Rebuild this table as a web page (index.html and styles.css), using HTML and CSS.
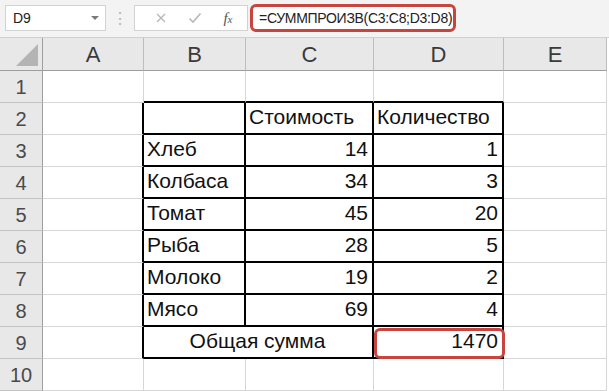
FILE: index.html
```html
<!DOCTYPE html>
<html lang="ru">
<head>
  <meta charset="UTF-8">
  <meta name="viewport" content="width=device-width, initial-scale=1.0">
  <link rel="stylesheet" href="styles.css">
  <title>Книга1</title>
</head>
<body>
  <div class="bar">
    <div class="namebox">
      <span>D9</span>
      <span class="arrow"></span>
    </div>
    <div class="grip">⋮</div>
    <div class="fxbox">
      <svg width="12" height="12" viewBox="0 0 12 12"><path d="M2 2 L10 10 M10 2 L2 10" stroke="#b8b8b8" stroke-width="1.4" fill="none"/></svg>
      <svg width="14" height="12" viewBox="0 0 14 12"><path d="M1.5 6.5 L5 10 L12.5 1.5" stroke="#b8b8b8" stroke-width="1.6" fill="none"/></svg>
      <span class="fx"><i>f</i><i class="x">x</i></span>
    </div>
    <div class="formula">=СУММПРОИЗВ(C3:C8;D3:D8)</div>
  </div>

  <div class="sheet">
    <div class="corner"><span class="tri"></span></div>
    <div class="colhead">A</div>
    <div class="colhead">B</div>
    <div class="colhead">C</div>
    <div class="colhead">D</div>
    <div class="colhead">E</div>

    <div class="rowhead">1</div>
    <div class="cell"></div>
    <div class="cell above"></div>
    <div class="cell above"></div>
    <div class="cell above"></div>
    <div class="cell"></div>

    <div class="rowhead">2</div>
    <div class="cell beside"></div>
    <div class="cell box"></div>
    <div class="cell box">Стоимость</div>
    <div class="cell box">Количество</div>
    <div class="cell"></div>

    <div class="rowhead">3</div>
    <div class="cell beside"></div>
    <div class="cell box">Хлеб</div>
    <div class="cell box num">14</div>
    <div class="cell box num">1</div>
    <div class="cell"></div>

    <div class="rowhead">4</div>
    <div class="cell beside"></div>
    <div class="cell box">Колбаса</div>
    <div class="cell box num">34</div>
    <div class="cell box num">3</div>
    <div class="cell"></div>

    <div class="rowhead">5</div>
    <div class="cell beside"></div>
    <div class="cell box">Томат</div>
    <div class="cell box num">45</div>
    <div class="cell box num">20</div>
    <div class="cell"></div>

    <div class="rowhead">6</div>
    <div class="cell beside"></div>
    <div class="cell box">Рыба</div>
    <div class="cell box num">28</div>
    <div class="cell box num">5</div>
    <div class="cell"></div>

    <div class="rowhead">7</div>
    <div class="cell beside"></div>
    <div class="cell box">Молоко</div>
    <div class="cell box num">19</div>
    <div class="cell box num">2</div>
    <div class="cell"></div>

    <div class="rowhead">8</div>
    <div class="cell beside"></div>
    <div class="cell box">Мясо</div>
    <div class="cell box num">69</div>
    <div class="cell box num">4</div>
    <div class="cell"></div>

    <div class="rowhead">9</div>
    <div class="cell beside"></div>
    <div class="cell box merged">Общая сумма</div>
    <div class="cell box num total"><span class="mark"></span>1470</div>
    <div class="cell"></div>

    <div class="rowhead">10</div>
    <div class="cell"></div>
    <div class="cell"></div>
    <div class="cell"></div>
    <div class="cell"></div>
    <div class="cell"></div>
  </div>
</body>
</html>
```

FILE: styles.css
```css
* {
  box-sizing: border-box;
}

body {
  margin: 0;
  width: 609px;
  height: 391px;
  overflow: hidden;
  background: #fff;
  font-family: "Liberation Sans", Arial, sans-serif;
}

/* formula bar */
.bar {
  display: flex;
  align-items: center;
  height: 37px;
  padding: 5px 0 6px 5px;
  background: #f3f3f3;
}

.namebox {
  display: flex;
  align-items: center;
  justify-content: space-between;
  width: 101px;
  height: 26px;
  padding: 0 6px 0 7px;
  background: #fff;
  border: 1px solid #d2d2d2;
  font-size: 14px;
  color: #222;
}

.arrow {
  width: 0;
  height: 0;
  border-left: 4px solid transparent;
  border-right: 4px solid transparent;
  border-top: 4px solid #7a7a7a;
}

.grip {
  width: 28px;
  text-align: center;
  color: #b5b5b5;
  font-size: 16px;
}

.fxbox {
  display: flex;
  align-items: center;
  justify-content: space-around;
  width: 114px;
  height: 26px;
  padding: 0 4px 0 10px;
  background: #fff;
  border: 1px solid #d2d2d2;
}

.fx {
  font-family: "Liberation Serif", serif;
  font-size: 15px;
  color: #555;
}

.fx .x {
  font-size: 11px;
}

.formula {
  display: flex;
  align-items: center;
  width: 206px;
  height: 28px;
  margin-left: 2px;
  padding-left: 6px;
  border: 3px solid #c8443f;
  border-radius: 6px;
  background: #fff;
  font-size: 14px;
  color: #222;
  letter-spacing: -0.3px;
}

/* grid */
.sheet {
  display: grid;
  grid-template-columns: 43px 101px 102px 128px 130px 103px;
  grid-template-rows: 33px repeat(10, 32px);
  border-top: 1px solid #d0d0d0;
}

.corner,
.colhead,
.rowhead {
  background: #e8e8e8;
  color: #3a3a3a;
  display: flex;
  align-items: center;
  justify-content: center;
}

.corner {
  position: relative;
  border-right: 1px solid #9e9e9e;
  border-bottom: 1px solid #9e9e9e;
}

.tri {
  position: absolute;
  right: 4px;
  bottom: 4px;
  width: 0;
  height: 0;
  border-left: 22px solid transparent;
  border-bottom: 22px solid #b4b4b4;
}

.colhead {
  font-size: 22px;
  padding-top: 2px;
  border-right: 1px solid #bdbdbd;
  border-bottom: 1px solid #9e9e9e;
}

.rowhead {
  font-size: 20px;
  padding-top: 2px;
  color: #4a4a4a;
  border-right: 1px solid #9e9e9e;
  border-bottom: 1px solid #c4c4c4;
}

.cell {
  display: flex;
  align-items: flex-end;
  padding: 0 4px 4px 3px;
  font-size: 21px;
  color: #111;
  border-right: 1px solid #d6d6d6;
  border-bottom: 1px solid #d6d6d6;
  white-space: nowrap;
}

.cell.above {
  border-bottom: 2px solid #000;
}

.cell.beside {
  border-right: 2px solid #000;
}

.cell.box {
  border-right: 2px solid #000;
  border-bottom: 2px solid #000;
}

.num {
  justify-content: flex-end;
}

.merged {
  grid-column: span 2;
  justify-content: center;
}

.total {
  position: relative;
}

/* highlight round the result */
.mark {
  position: absolute;
  left: 0;
  top: 1px;
  right: -3px;
  bottom: -2px;
  border: 3px solid #c8443f;
  border-radius: 6px;
}
```
